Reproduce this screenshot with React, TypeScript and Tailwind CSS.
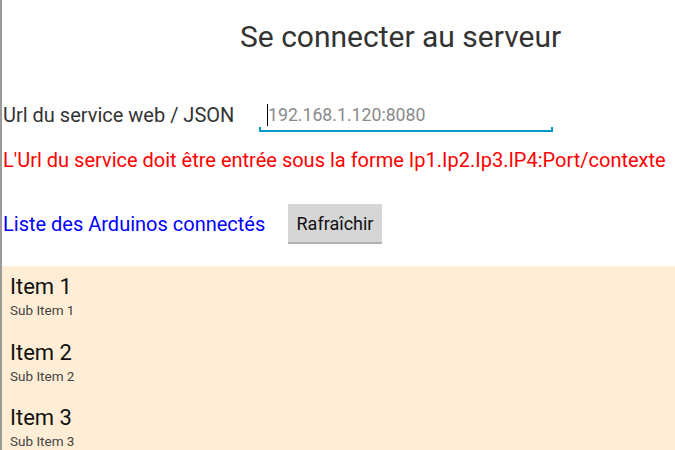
export default function App() {
  const items = [1, 2, 3]
  return (
    <div
      className="w-[675px] h-[450px] overflow-hidden bg-white border-l-2 border-[#9a9a9a] flex flex-col"
      style={{ fontFamily: "Roboto, 'Liberation Sans', sans-serif" }}
    >
      <h1 className="h-[82px] shrink-0 pl-[238px] pt-[17px] text-[30px] leading-[40px] text-[#333333]">
        Se connecter au serveur
      </h1>

      <div className="h-[66px] shrink-0 flex items-center pl-px">
        <span className="text-[20px] text-[#333333] w-[256px]">Url du service web / JSON</span>
        <div className="relative w-[294px] h-[34px] flex items-center pl-[8px]">
          <span className="w-px h-[22px] bg-black" />
          <span className="text-[17.7px] text-[#8a8a8a]">192.168.1.120:8080</span>
          <span className="absolute left-0 right-0 bottom-0 h-[2px] bg-[#0099cc]" />
          <span className="absolute left-0 bottom-0 w-[2px] h-[5px] bg-[#0099cc]" />
          <span className="absolute right-0 bottom-0 w-[2px] h-[5px] bg-[#0099cc]" />
        </div>
      </div>

      <p className="h-[34px] shrink-0 pl-px text-[20px] leading-[24px] text-[#ff0000] whitespace-nowrap">
        L'Url du service doit être entrée sous la forme Ip1.Ip2.Ip3.IP4:Port/contexte
      </p>

      <div className="h-[84px] shrink-0 flex items-center pl-px">
        <span className="text-[20px] text-[#0000ff] w-[285px]">Liste des Arduinos connectés</span>
        <button className="w-[94px] h-[40px] bg-[#d6d6d6] border-b-2 border-[#b0b0b0] text-[18px] text-[#111111]">
          Rafraîchir
        </button>
      </div>

      <ul className="flex-1 bg-[#ffeed5]">
        {items.map((i) => (
          <li key={i} className="h-[65.5px] pl-[8px] pt-[8px]">
            <div className="text-[22px] leading-[26px] text-[#111111]">Item {i}</div>
            <div className="text-[13.5px] leading-[16px] mt-[2px] text-[#444444]">Sub Item {i}</div>
          </li>
        ))}
      </ul>
    </div>
  )
}
